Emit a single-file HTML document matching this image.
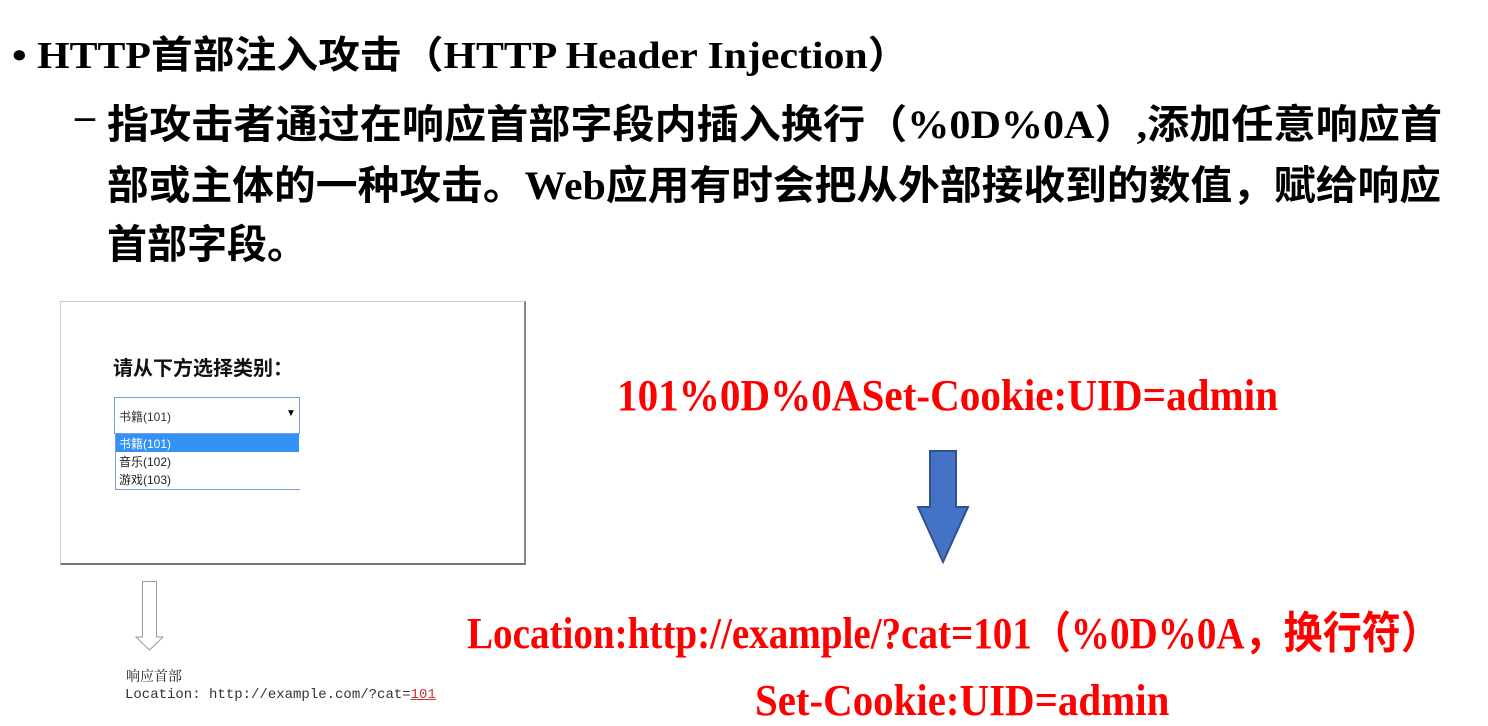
<!DOCTYPE html>
<html><head><meta charset="utf-8"><style>
body{margin:0;width:1488px;height:718px;background:#fff;position:relative;overflow:hidden;font-family:"Liberation Sans","Noto Sans CJK SC",sans-serif}
.a{position:absolute;white-space:nowrap;transform-origin:0 0}
.t{font-family:"Liberation Serif","Noto Sans CJK SC",serif;font-weight:bold;color:#000}
.r{font-family:"Liberation Serif","Noto Sans CJK SC",serif;font-weight:bold;color:#f00}
</style></head><body>
<div class="a t" style="left:12px;top:24px;font-size:38px;transform:scaleX(1.1)">• HTTP首部注入攻击（HTTP Header Injection）</div>
<div class="a t" style="left:75px;top:92px;font-size:40px">–</div>
<div class="a t" style="left:107px;top:92px;font-size:40px;transform:scaleX(1.053)">指攻击者通过在响应首部字段内插入换行（%0D%0A）,添加任意响应首</div>
<div class="a t" style="left:107px;top:153px;font-size:40px;transform:scaleX(1.044)">部或主体的一种攻击。Web应用有时会把从外部接收到的数值，赋给响应</div>
<div class="a t" style="left:107px;top:212px;font-size:40px">首部字段。</div>

<div style="position:absolute;left:60px;top:301px;width:463px;height:261px;border:1px solid #ccc;border-bottom:2px solid #777;border-right:2px solid #888"></div>
<div class="a" style="left:113px;top:352px;font-size:20px;font-weight:bold;color:#111">请从下方选择类别：</div>
<div style="position:absolute;left:114px;top:397px;width:184px;height:35px;border:1px solid #7a9ee0;background:#fff"></div>
<div class="a" style="left:119px;top:408px;font-size:12px;color:#333">书籍(101)</div>
<div class="a" style="left:286px;top:408px;font-size:10px;color:#000">▼</div>
<div style="position:absolute;left:115px;top:434px;width:184px;height:55px;border-left:1px solid #7a9ee0;border-bottom:1px solid #7a9ee0;background:#fff"></div>
<div style="position:absolute;left:116px;top:434px;width:183px;height:18px;background:#3392f5"></div>
<div class="a" style="left:119px;top:435px;font-size:12px;color:#fff">书籍(101)</div>
<div class="a" style="left:119px;top:453px;font-size:12px;color:#222">音乐(102)</div>
<div class="a" style="left:119px;top:471px;font-size:12px;color:#222">游戏(103)</div>

<svg style="position:absolute;left:133px;top:580px" width="34" height="74"><path d="M9.5 1.5H23.5V57H30L16.5 70L3 57H9.5Z" fill="#fff" stroke="#999" stroke-width="1"/></svg>
<div class="a" style="left:126px;top:666px;font-size:14px;font-family:'Liberation Serif','Noto Serif CJK SC',serif;color:#222">响应首部</div>
<div class="a" style="left:125px;top:687px;font-size:14px;font-family:'Liberation Mono','Noto Serif CJK SC',monospace;color:#333">Location: http://example.com/?cat=<span style="color:#c33;text-decoration:underline">101</span></div>

<div class="a r" style="left:617px;top:370px;font-size:44px;transform:scaleX(0.935)">101%0D%0ASet-Cookie:UID=admin</div>
<svg style="position:absolute;left:916px;top:449px" width="54" height="116"><path d="M14 2H40V58H52L27 113L2 58H14Z" fill="#4472c4" stroke="#2f528f" stroke-width="2"/></svg>
<div class="a r" style="left:467px;top:597px;font-size:44px;transform:scaleX(0.888)">Location:http://example/?cat=101（%0D%0A，换行符）</div>
<div class="a r" style="left:755px;top:675px;font-size:44px;transform:scaleX(0.93)">Set-Cookie:UID=admin</div>
</body></html>
